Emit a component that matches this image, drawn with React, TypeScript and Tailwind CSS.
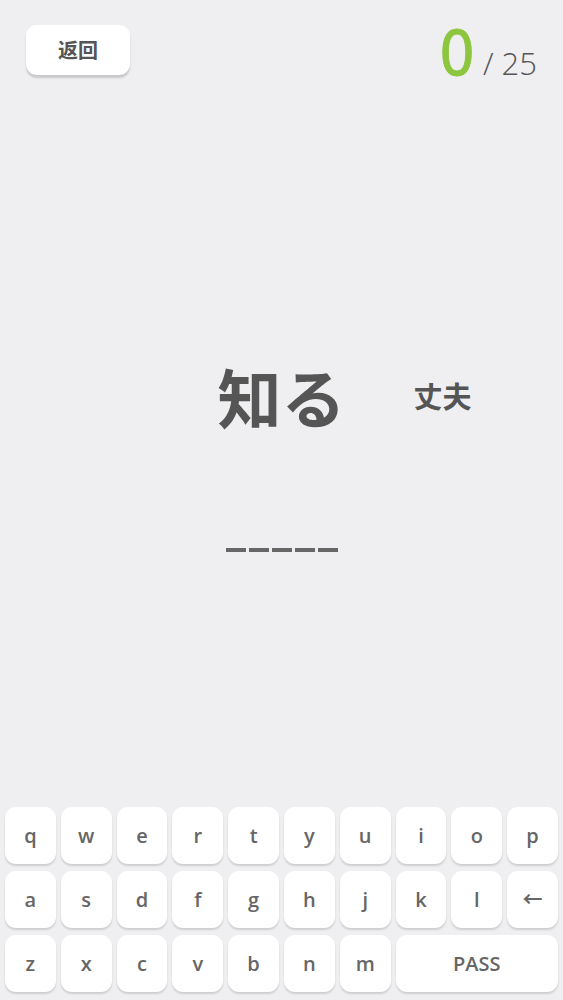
import React from 'react'

const rows: string[][] = [
  ['q', 'w', 'e', 'r', 't', 'y', 'u', 'i', 'o', 'p'],
  ['a', 's', 'd', 'f', 'g', 'h', 'j', 'k', 'l', '←'],
  ['z', 'x', 'c', 'v', 'b', 'n', 'm'],
]

function Key({ label, wide }: { label: string; wide?: boolean }) {
  return (
    <button
      className={`h-[57px] rounded-[11px] bg-white text-[20px] font-semibold text-[#666666] shadow-[0_2px_2px_rgba(0,0,0,0.14)] flex items-center justify-center ${wide ? 'col-span-3' : ''}`}
    >
      {label}
    </button>
  )
}

export default function App() {
  return (
    <div
      className="flex flex-col h-[1000px] w-full bg-[#efeef1]"
      style={{ fontFamily: '"Open Sans", "Noto Sans CJK JP", sans-serif' }}
    >
      {/* header */}
      <div className="flex items-start justify-between h-[75px] pl-[26px] pr-[26px] pt-[25px]">
        <button
          className="w-[104px] h-[50px] rounded-[11px] bg-white text-[20px] font-bold text-[#555555] shadow-[0_3px_2px_rgba(0,0,0,0.16)] flex items-center justify-center"
          style={{ fontFamily: '"Noto Sans CJK SC", sans-serif' }}
        >
          返回
        </button>
        <div className="flex items-baseline -mt-[3px]">
          <span
            className="inline-block text-[63px] leading-none font-normal text-[#8cc63e] scale-x-[0.9] origin-right [-webkit-text-stroke:1px_#8cc63e]"
            style={{ fontFamily: '"DejaVu Sans", sans-serif' }}
          >
            0
          </span>
          <span className="ml-[8px] text-[31px] leading-none font-light text-[#555555]">
            / 25
          </span>
        </div>
      </div>

      {/* word */}
      <div className="grid grid-cols-[1fr_auto_1fr] items-center mt-[288px]">
        <div />
        <div className="text-[64px] leading-none font-bold text-[#555555]" style={{ fontFamily: '"Noto Sans CJK JP", sans-serif' }}>
          知る
        </div>
        <div className="pl-[68px] text-[29px] leading-none font-bold text-[#555555]" style={{ fontFamily: '"Noto Sans CJK JP", sans-serif' }}>
          丈夫
        </div>
      </div>

      {/* blanks */}
      <div className="flex justify-center gap-[3px] mt-[121px]">
        {[0, 1, 2, 3, 4].map(i => (
          <span key={i} className="block w-[20px] h-[4px] bg-[#666666]" />
        ))}
      </div>

      {/* keyboard */}
      <div className="mt-auto grid grid-cols-10 gap-x-[5px] gap-y-[7px] px-[5px] pb-[8px]">
        {rows.map(r => r.map(k => <Key key={k} label={k} />))}
        <Key label="PASS" wide />
      </div>
    </div>
  )
}
